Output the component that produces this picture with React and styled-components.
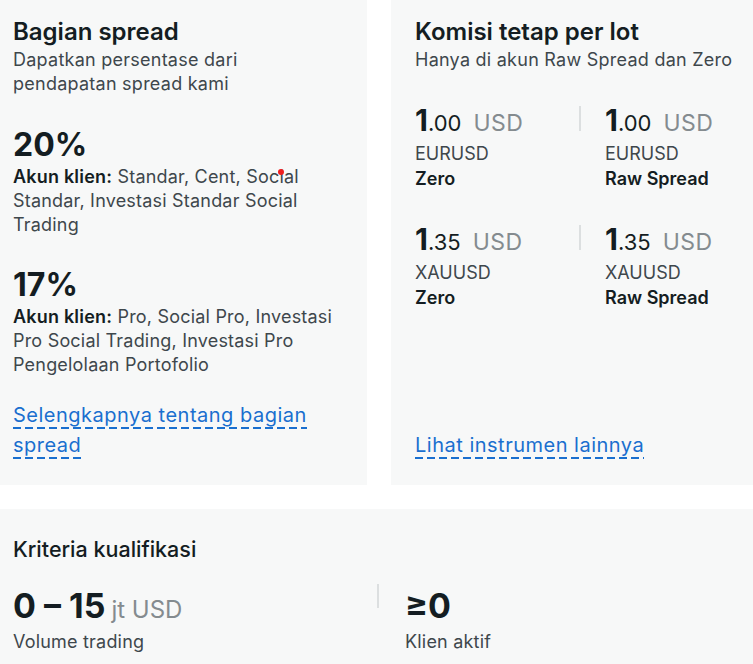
import React from "react";
import styled, { createGlobalStyle } from "styled-components";

const Global = createGlobalStyle`
  html, body { margin: 0; padding: 0; background: #ffffff; }
  body { font-family: Inter, "Noto Sans", sans-serif; color: #141d22; -webkit-font-smoothing: antialiased; }
  * { box-sizing: border-box; }
`;

const Page = styled.div`
  width: 753px;
  display: flex;
  flex-direction: column;
  gap: 24px;
  overflow: hidden;
`;

const TopRow = styled.div`
  display: grid;
  grid-template-columns: 367px 1fr;
  gap: 24px;
`;

const Card = styled.section`
  position: relative;
  background: #f7f8f8;
  padding: ${(p) => p.$pad || "16px 24px 24px"};
  display: flex;
  flex-direction: column;
  min-height: ${(p) => p.$minH || "auto"};
`;

const Title = styled.h2`
  margin: 0;
  font-size: 24px;
  line-height: 32px;
  font-weight: 600;
  color: #141d22;
`;

const Sub = styled.p`
  margin: 0;
  font-size: 18px;
  line-height: 24px;
  color: #3e474c;
  letter-spacing: 0.25px;
  white-space: nowrap;
`;

const Block = styled.div`
  margin-top: ${(p) => p.$mt || "28px"};
`;

const Big = styled.div`
  font-size: 32px;
  line-height: 40px;
  font-weight: 700;
  color: #141d22;
`;

const Para = styled.p`
  margin: 0;
  font-size: 18px;
  line-height: 24px;
  color: #3e474c;
  letter-spacing: 0.2px;
  b { font-weight: 600; color: #141d22; }
`;

const LinkWrap = styled.div`
  margin-top: auto;
  padding-top: 23px;
  line-height: 30px;
  font-size: 20px;
`;

const Link = styled.a`
  color: #1a6fcf;
  text-decoration: none;
  letter-spacing: 0.5px;
  padding-bottom: 2px;
  background-image: linear-gradient(to right, #1a6fcf 8px, transparent 8px);
  background-size: 12px 2px;
  background-repeat: repeat-x;
  background-position: 0 100%;
  -webkit-box-decoration-break: clone;
  box-decoration-break: clone;
`;

const Grid = styled.div`
  display: flex;
  flex-direction: column;
  gap: 30px;
  margin-top: 30px;
`;

const PairRow = styled.div`
  display: flex;
  align-items: flex-start;
`;

const Cell = styled.div`
  width: ${(p) => p.$w || "164px"};
`;

const Divider = styled.div`
  width: 2px;
  height: 25px;
  background: #dcdfe0;
  margin: 4px 24px 0 0;
  flex: none;
`;

const Value = styled.div`
  display: flex;
  align-items: baseline;
  line-height: 36px;
  white-space: nowrap;
`;

const One = styled.span`
  font-size: 30px;
  font-weight: 700;
  color: #141d22;
`;

const Dec = styled.span`
  font-size: 22px;
  color: #141d22;
  font-weight: 400;
`;

const Unit = styled.span`
  font-size: 23px;
  color: #848b8f;
  margin-left: 12px;
  letter-spacing: 0.5px;
`;

const Instr = styled.div`
  font-size: 18px;
  line-height: 25px;
  color: #3e474c;
`;

const Acc = styled.div`
  font-size: 18px;
  line-height: 25px;
  font-weight: 600;
  color: #141d22;
`;

const Dot = styled.span`
  position: absolute;
  left: 278px;
  top: 169px;
  width: 6px;
  height: 6px;
  border-radius: 50%;
  background: #f01e1e;
`;

const CritTitle = styled.h3`
  margin: 0;
  font-size: 21.5px;
  font-weight: 500;
  line-height: 28px;
  color: #141d22;
`;

const CritRow = styled.div`
  display: flex;
  align-items: flex-start;
  margin-top: 21px;
`;

const CritCell = styled.div`
  width: ${(p) => p.$w || "auto"};
`;

const CritValue = styled.div`
  display: flex;
  align-items: baseline;
  height: 48px;
  line-height: 44px;
  white-space: nowrap;
`;

const CritBig = styled.span`
  font-size: 34px;
  font-weight: 700;
  color: #141d22;
`;

const CritUnit = styled.span`
  font-size: 24px;
  color: #848b8f;
  margin-left: 6px;
`;

const CritLabel = styled.div`
  font-size: 18px;
  line-height: 20px;
  color: #3e474c;
  letter-spacing: 0.2px;
`;

const CritDivider = styled(Divider)`
  height: 24px;
  margin: 0 26px 0 0;
`;

const commissions = [
  [
    { v: ".00", i: "EURUSD", a: "Zero" },
    { v: ".00", i: "EURUSD", a: "Raw Spread" },
  ],
  [
    { v: ".35", i: "XAUUSD", a: "Zero" },
    { v: ".35", i: "XAUUSD", a: "Raw Spread" },
  ],
];

function Commission({ v, i, a }) {
  return (
    <>
      <Value>
        <One>1</One>
        <Dec>{v}</Dec>
        <Unit>USD</Unit>
      </Value>
      <Instr>{i}</Instr>
      <Acc>{a}</Acc>
    </>
  );
}

export default function App() {
  return (
    <>
      <Global />
      <Page>
        <TopRow>
          <Card $pad="16px 24px 25px 13px" $minH="485px">
            <Title>Bagian spread</Title>
            <Sub>
              Dapatkan persentase dari
              <br />
              pendapatan spread kami
            </Sub>
            <Block $mt="29px">
              <Big>20%</Big>
              <Para>
                <b>Akun klien:</b> Standar, Cent, Social Standar, Investasi
                Standar Social Trading
              </Para>
            </Block>
            <Block $mt="28px">
              <Big>17%</Big>
              <Para>
                <b>Akun klien:</b> Pro, Social Pro, Investasi Pro Social
                Trading, Investasi Pro Pengelolaan Portofolio
              </Para>
            </Block>
            <LinkWrap>
              <Link href="#">
                Selengkapnya tentang bagian
                <br />
                spread
              </Link>
            </LinkWrap>
            <Dot />
          </Card>
          <Card $pad="16px 16px 25px 24px" $minH="485px">
            <Title>Komisi tetap per lot</Title>
            <Sub>Hanya di akun Raw Spread dan Zero</Sub>
            <Grid>
              {commissions.map((row, r) => (
                <PairRow key={r}>
                  <Cell>
                    <Commission {...row[0]} />
                  </Cell>
                  <Divider />
                  <Cell $w="auto">
                    <Commission {...row[1]} />
                  </Cell>
                </PairRow>
              ))}
            </Grid>
            <LinkWrap>
              <Link href="#">Lihat instrumen lainnya</Link>
            </LinkWrap>
          </Card>
        </TopRow>
        <Card $pad="26px 13px 24px">
          <CritTitle>Kriteria kualifikasi</CritTitle>
          <CritRow>
            <CritCell $w="364px">
              <CritValue>
                <CritBig>0 – 15</CritBig>
                <CritUnit>jt USD</CritUnit>
              </CritValue>
              <CritLabel>Volume trading</CritLabel>
            </CritCell>
            <CritDivider />
            <CritCell>
              <CritValue>
                <CritBig>≥0</CritBig>
              </CritValue>
              <CritLabel>Klien aktif</CritLabel>
            </CritCell>
          </CritRow>
        </Card>
      </Page>
    </>
  );
}
